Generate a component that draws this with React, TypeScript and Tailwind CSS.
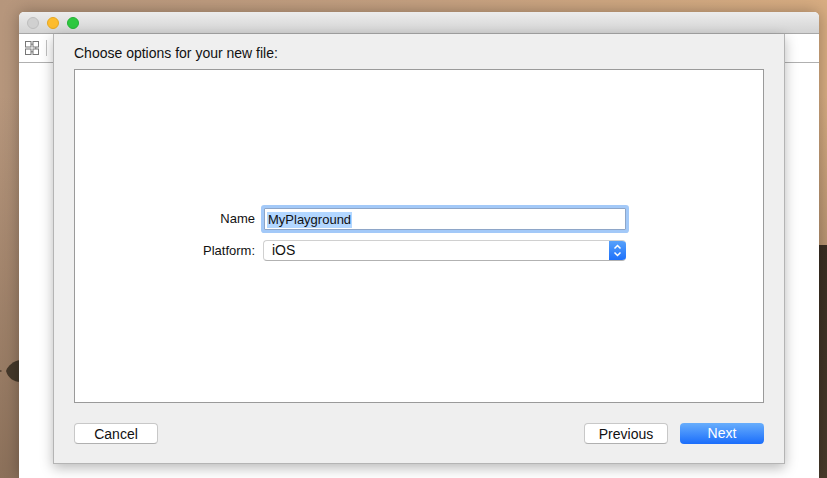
export default function App() {
  return (
    <div
      className="relative w-[827px] h-[478px] overflow-hidden bg-[linear-gradient(180deg,#00000000_0%,#00000000_20%,#8b705a_100%),linear-gradient(90deg,#b6967c_0%,#c4a080_50%,#d8ad82_100%)]"
      style={{ fontFamily: '"Liberation Sans", Arial, sans-serif' }}
    >
      {/* wallpaper details */}
      <svg className="absolute left-0 top-[355px]" width="20" height="32" viewBox="0 0 20 32">
        <path d="M6 16C8 10 14 6 20 5V27C14 27 8 23 6 16Z" fill="#44382a" />
        <rect x="0" y="15" width="1.5" height="2" fill="#5c4a3a" />
      </svg>
      <div className="absolute left-[819px] top-[245px] w-[8px] h-[233px] bg-[linear-gradient(180deg,#3a2e22,#4a3c2c)]" />

      {/* Window */}
      <div className="absolute left-[19px] top-[12px] w-[800px] h-[466px] flex flex-col rounded-t-[5px] bg-white overflow-hidden shadow-[0_0_16px_rgba(0,0,0,0.3)]">
        <div className="h-[22px] shrink-0 flex items-center gap-[8px] pl-[8px] pt-px border-b border-[#a8a8a8] bg-[linear-gradient(180deg,#ececec,#d3d3d3)]">
          <span className="w-[12px] h-[12px] rounded-full bg-[#d0d0d0] border border-[#bdbdbd]" />
          <span className="w-[12px] h-[12px] rounded-full bg-[#fdbc2e] border border-[#e5a721]" />
          <span className="w-[12px] h-[12px] rounded-full bg-[#2ec840] border border-[#25b135]" />
        </div>
        <div className="h-[29px] shrink-0 flex items-center pl-[6px] gap-[7px] border-b border-[#b0b0b0] bg-white">
          <svg width="14" height="14" viewBox="0 0 14 14" fill="none" stroke="#777" strokeWidth="1">
            <rect x="0.5" y="0.5" width="5.5" height="5.5" />
            <rect x="8" y="0.5" width="5.5" height="5.5" />
            <rect x="0.5" y="8" width="5.5" height="5.5" />
            <rect x="8" y="8" width="5.5" height="5.5" />
            <path d="M6 3.2H8M6 10.8H8M10.8 6V8" />
          </svg>
          <span className="w-px h-[16px] bg-[#c0c0c0]" />
        </div>
      </div>

      {/* Sheet */}
      <div className="absolute left-[53px] top-[34px] w-[732px] h-[430px] flex flex-col bg-[#efefef] border-x border-b border-[#b4b4b4] px-[20px] pt-[12px] shadow-[0_4px_12px_rgba(0,0,0,0.28)]">
        <div className="h-[15px] mb-[8px] flex items-center text-[14px] leading-[15px] text-[#111]">
          Choose options for your new file:
        </div>
        <div className="w-[690px] h-[334px] shrink-0 bg-white border border-[#9a9a9a] flex items-center justify-center pb-[3px] pr-[17px]">
          <div className="flex flex-col gap-[10px]">
            <div className="flex items-center h-[22px]">
              <span className="w-[60px] text-right text-[13px] text-[#111]">Name</span>
              <div className="ml-[9px] w-[362px] h-[22px] flex items-center bg-white border border-[#8ea6c8] shadow-[0_0_0_3px_#a3c9f8] rounded-[1px] pl-[2px] pt-px text-[13px] text-[#111]">
                <span className="bg-[#b3d7ff] leading-[16px] px-px">MyPlayground</span>
              </div>
            </div>
            <div className="flex items-center h-[21px]">
              <span className="w-[60px] text-right text-[13px] text-[#111]">Platform:</span>
              <div className="ml-[8px] w-[363px] h-[21px] flex items-center bg-white border border-r-0 border-[#d0d0d0] border-b-[#b2b2b2] rounded-[4px] overflow-hidden">
                <span className="flex-1 pl-[8px] text-[14px] text-[#111]">iOS</span>
                <div className="w-[17px] h-[21px] shrink-0 flex items-center justify-center bg-[linear-gradient(180deg,#5aa4fb,#1a6efb)]">
                  <svg width="9" height="15" viewBox="0 0 9 15" fill="none" stroke="#fff" strokeWidth="1.5">
                    <path d="M1.5 5.5L4.5 2.5L7.5 5.5" />
                    <path d="M1.5 9.5L4.5 12.5L7.5 9.5" />
                  </svg>
                </div>
              </div>
            </div>
          </div>
        </div>
        <div className="mt-[20px] flex items-center gap-[12px]">
          <button className="w-[84px] h-[21px] bg-white border border-[#c8c8c8] border-b-[#b0b0b0] rounded-[4px] text-[14px] text-[#111]">Cancel</button>
          <div className="flex-1" />
          <button className="w-[84px] h-[21px] bg-white border border-[#c8c8c8] border-b-[#b0b0b0] rounded-[4px] text-[14px] text-[#111]">Previous</button>
          <button className="w-[84px] h-[21px] rounded-[4px] text-[14px] text-white bg-[linear-gradient(180deg,#68aefc,#1a6dfb)]">Next</button>
        </div>
      </div>
    </div>
  );
}
